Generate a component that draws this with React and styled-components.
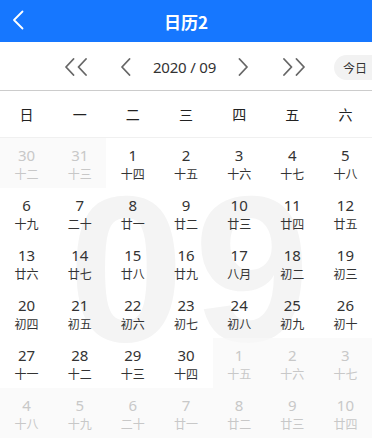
import React from "react";
import styled, { createGlobalStyle } from "styled-components";

const GlobalStyle = createGlobalStyle`
  html, body { margin: 0; padding: 0; background: #fff; }
  body { font-family: "Noto Sans", "Noto Sans CJK SC", sans-serif; color: #333; }
`;

const Page = styled.div`
  width: 372px;
  height: 443px;
  overflow: hidden;
  background: #fff;
`;

const NavBar = styled.header`
  position: relative;
  height: 42px;
  background: #1677ff;
  display: flex;
  align-items: center;
  justify-content: center;
`;

const BackButton = styled.button`
  position: absolute;
  left: 8px;
  top: 9px;
  width: 20px;
  height: 22px;
  padding: 0;
  border: 0;
  background: transparent;
  display: flex;
  align-items: center;
  justify-content: center;
`;

const Title = styled.h1`
  margin: 0;
  color: #fff;
  font-size: 17px;
  font-weight: 700;
  font-family: "Noto Sans CJK SC", sans-serif;
  line-height: 1;
`;

const Toolbar = styled.div`
  position: relative;
  height: 49px;
  border-bottom: 1px solid #cccccc;
  display: flex;
  align-items: center;
  justify-content: center;
  padding-top: 2px;
  box-sizing: border-box;
  padding-right: 2px;
`;

const IconButton = styled.button`
  padding: 0;
  border: 0;
  background: transparent;
  display: flex;
  align-items: center;
  margin-left: ${(p) => p.$offset || 0}px;
`;

const MonthLabel = styled.span`
  font-size: 15px;
  color: #333;
  font-family: "Noto Sans", sans-serif;
  margin: 0 22px;
  letter-spacing: -0.2px;
`;

const TodayButton = styled.button`
  position: absolute;
  left: 334px;
  top: 13px;
  width: 52px;
  height: 25px;
  border: 0;
  border-radius: 13px;
  background: #f2f2f2;
  color: #333;
  font-size: 12px;
  font-family: "Noto Sans CJK SC", sans-serif;
  text-align: left;
  padding: 0 0 0 9px;
`;

const Calendar = styled.div`
  position: relative;
  overflow: hidden;
  height: 351px;
`;

const Watermark = styled.div`
  position: absolute;
  inset: 0;
  display: flex;
  align-items: center;
  justify-content: center;
  font-family: "Liberation Sans", sans-serif;
  font-weight: 700;
  font-size: 208px;
  line-height: 1;
  color: #f4f4f4;
  letter-spacing: 10px;
  padding: 4px 0 0 16px;
  z-index: 0;
  pointer-events: none;
`;

const WeekHeader = styled.div`
  position: relative;
  z-index: 1;
  display: grid;
  grid-template-columns: repeat(7, 1fr);
  height: 46px;
  border-bottom: 1px solid #f0f0f0;
`;

const WeekDay = styled.div`
  display: flex;
  align-items: center;
  justify-content: center;
  font-size: 14px;
  color: #222;
  font-family: "Noto Sans CJK SC", sans-serif;
`;

const DaysGrid = styled.div`
  position: relative;
  z-index: 1;
  display: grid;
  grid-template-columns: repeat(7, 1fr);
  grid-auto-rows: 50px;
`;

const DayCell = styled.div`
  display: flex;
  flex-direction: column;
  align-items: center;
  justify-content: center;
  gap: 1px;
  padding-top: 3px;
  box-sizing: border-box;
  background: ${(p) => (p.$muted ? "rgba(248,248,248,0.75)" : "transparent")};
  color: ${(p) => (p.$muted ? "#c8c8c8" : "#333")};
`;

const DayNum = styled.span`
  font-size: 15px;
  line-height: 17px;
  font-family: "Noto Sans", sans-serif;
`;

const Lunar = styled.span`
  font-size: 12px;
  line-height: 17px;
  font-family: "Noto Sans CJK SC", sans-serif;
`;

const Chevron = ({ double, dir = "left", color = "#666" }) => {
  const w = double ? 24 : 11;
  const paths =
    dir === "left"
      ? double
        ? "M9.5 1 L2 9 L9.5 17 M22 1 L14.5 9 L22 17"
        : "M9.5 1 L2 9 L9.5 17"
      : double
      ? "M2 1 L9.5 9 L2 17 M14.5 1 L22 9 L14.5 17"
      : "M1.5 1 L9 9 L1.5 17";
  return (
    <svg width={w} height="18" viewBox={`0 0 ${w} 18`} fill="none">
      <path d={paths} stroke={color} strokeWidth="1.8" strokeLinecap="round" strokeLinejoin="round" />
    </svg>
  );
};

const weekdays = ["日", "一", "二", "三", "四", "五", "六"];

const days = [
  [30, "十二", 1], [31, "十三", 1], [1, "十四"], [2, "十五"], [3, "十六"], [4, "十七"], [5, "十八"],
  [6, "十九"], [7, "二十"], [8, "廿一"], [9, "廿二"], [10, "廿三"], [11, "廿四"], [12, "廿五"],
  [13, "廿六"], [14, "廿七"], [15, "廿八"], [16, "廿九"], [17, "八月"], [18, "初二"], [19, "初三"],
  [20, "初四"], [21, "初五"], [22, "初六"], [23, "初七"], [24, "初八"], [25, "初九"], [26, "初十"],
  [27, "十一"], [28, "十二"], [29, "十三"], [30, "十四"], [1, "十五", 1], [2, "十六", 1], [3, "十七", 1],
  [4, "十八", 1], [5, "十九", 1], [6, "二十", 1], [7, "廿一", 1], [8, "廿二", 1], [9, "廿三", 1], [10, "廿四", 1],
];

export default function App() {
  return (
    <Page>
      <GlobalStyle />
      <NavBar>
        <BackButton aria-label="back">
          <svg width="12" height="20" viewBox="0 0 12 20" fill="none">
            <path d="M10.5 1.5 L2 10 L10.5 18.5" stroke="#fff" strokeWidth="1.8" strokeLinecap="round" strokeLinejoin="round" />
          </svg>
        </BackButton>
        <Title>日历2</Title>
      </NavBar>
      <Toolbar>
        <IconButton aria-label="prev year">
          <Chevron double dir="left" />
        </IconButton>
        <IconButton $offset={32} aria-label="prev month">
          <Chevron dir="left" />
        </IconButton>
        <MonthLabel>2020 / 09</MonthLabel>
        <IconButton aria-label="next month">
          <Chevron dir="right" />
        </IconButton>
        <IconButton $offset={33} aria-label="next year">
          <Chevron double dir="right" />
        </IconButton>
        <TodayButton>今日</TodayButton>
      </Toolbar>
      <Calendar>
        <Watermark>09</Watermark>
        <WeekHeader>
          {weekdays.map((w) => (
            <WeekDay key={w}>{w}</WeekDay>
          ))}
        </WeekHeader>
        <DaysGrid>
          {days.map(([d, l, m], i) => (
            <DayCell key={i} $muted={!!m}>
              <DayNum>{d}</DayNum>
              <Lunar>{l}</Lunar>
            </DayCell>
          ))}
        </DaysGrid>
      </Calendar>
    </Page>
  );
}
